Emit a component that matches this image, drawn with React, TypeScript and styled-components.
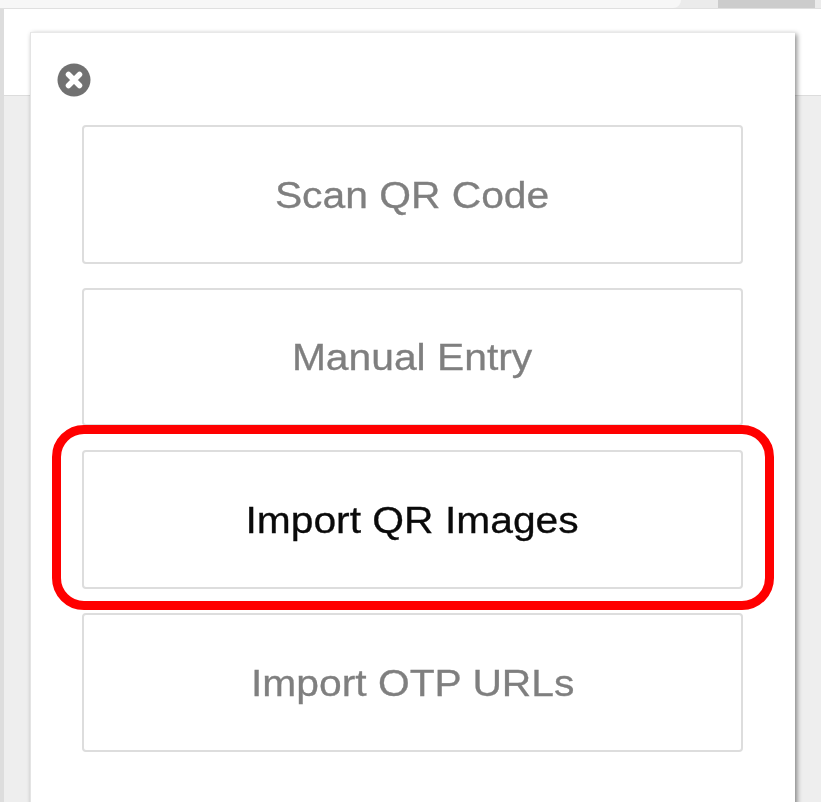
import { createGlobalStyle } from "styled-components";
import styled from "styled-components";

const GlobalStyle = createGlobalStyle`
    html, body {
        margin: 0;
        padding: 0;
        height: 100%;
        overflow: hidden;
        background: #ffffff;
        font-family: "Liberation Sans", Arial, sans-serif;
    }

    #root {
        height: 100%;
    }
`

const Page = styled.div`
    position: relative;
    height: 802px;
    display: flex;
    flex-direction: column;
    overflow: hidden;
`

const BrowserStrip = styled.div`
    height: 8px;
    flex-shrink: 0;
    background: #ebebeb;
    border-bottom: 1px solid #e0e0e0;
    display: flex;
    padding-right: 6px;
`

const ActiveTab = styled.div`
    width: 681px;
    background: #f7f7f7;
    border-bottom-right-radius: 14px;
`

const InactiveTab = styled.div`
    margin-left: auto;
    width: 97px;
    background: #cccccc;
`

const Workspace = styled.div`
    flex: 1;
    display: flex;
`

const SideRail = styled.div`
    width: 4px;
    flex-shrink: 0;
    background: #dddddd;
`

const Content = styled.div`
    flex: 1;
    display: flex;
    flex-direction: column;
`

const Header = styled.div`
    height: 86px;
    flex-shrink: 0;
    background: #ffffff;
    border-bottom: 1px solid #dcdcdc;
`

const Backdrop = styled.div`
    flex: 1;
    background: #eeeeee;
`

const Modal = styled.div`
    position: absolute;
    top: 32px;
    left: 30px;
    width: 765px;
    height: 790px;
    box-sizing: border-box;
    padding: 30px 52px 0 51px;
    background: #ffffff;
    border-top: 1px solid #e8e8e8;
    border-left: 1px solid #e4e4e4;
    box-shadow: 2px 2px 5px rgba(0, 0, 0, 0.45);
`

const CloseButton = styled.button`
    display: block;
    width: 34px;
    height: 34px;
    margin: 0 0 28px -25px;
    padding: 0;
    border: 0;
    background: none;
`

const Options = styled.div`
    display: flex;
    flex-direction: column;
    gap: 24px;
`

const OptionButton = styled.div<{ $active?: boolean }>`
    position: relative;
    height: 138.67px;
    box-sizing: border-box;
    display: flex;
    align-items: center;
    justify-content: center;
    padding-top: 3px;
    background: #ffffff;
    border: 2px solid #dddddd;
    border-radius: 4px;
    font-size: 36px;
    color: ${(p) => (p.$active ? "#0a0a0a" : "#7f7f7f")};
`

const OptionLabel = styled.span`
    display: inline-block;
    transform: scaleX(1.133);
    filter: blur(0.4px);
    -webkit-text-stroke: 0.3px currentColor;
`

const Highlight = styled.span`
    position: absolute;
    top: -27px;
    left: -32px;
    right: -33px;
    bottom: -23px;
    border: 9px solid #ff0000;
    border-radius: 32px;
`

function CloseIcon() {
    return (
        <svg width="34" height="34" viewBox="0 0 34 34">
            <circle cx="17" cy="17" r="16.5" fill="#717171" />
            <path d="M11.5 11.5 L22.5 22.5 M22.5 11.5 L11.5 22.5" stroke="#ffffff" strokeWidth="5.5" strokeLinecap="round" />
        </svg>
    );
}

export default function App() {
    return (
        <Page>
            <GlobalStyle />
            <BrowserStrip>
                <ActiveTab />
                <InactiveTab />
            </BrowserStrip>
            <Workspace>
                <SideRail />
                <Content>
                    <Header />
                    <Backdrop />
                </Content>
            </Workspace>
            <Modal>
                <CloseButton><CloseIcon /></CloseButton>
                <Options>
                    <OptionButton><OptionLabel>Scan QR Code</OptionLabel></OptionButton>
                    <OptionButton><OptionLabel>Manual Entry</OptionLabel></OptionButton>
                    <OptionButton $active>
                        <OptionLabel>Import QR Images</OptionLabel>
                        <Highlight />
                    </OptionButton>
                    <OptionButton><OptionLabel>Import OTP URLs</OptionLabel></OptionButton>
                </Options>
            </Modal>
        </Page>
    );
}
